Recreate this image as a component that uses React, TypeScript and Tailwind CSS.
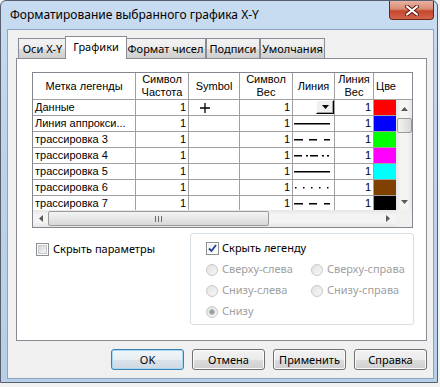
import React from 'react';

const UI = "font-['Noto_Sans','Open_Sans',sans-serif]";
const MS = "font-['Liberation_Sans',Arial,sans-serif]";

type LineKind = 'drop' | 'solid' | 'dash' | 'dashdot' | 'dot';

type Row = {
  name: string;
  plus?: boolean;
  line: LineKind;
  color: string;
};

const rows: Row[] = [
  { name: 'Данные', plus: true, line: 'drop', color: 'bg-[#ff0000]' },
  { name: 'Линия аппрокси...', line: 'solid', color: 'bg-[#0000ff]' },
  { name: 'трассировка 3', line: 'dash', color: 'bg-[#00ff00]' },
  { name: 'трассировка 4', line: 'dashdot', color: 'bg-[#ff00ff]' },
  { name: 'трассировка 5', line: 'solid', color: 'bg-[#00ffff]' },
  { name: 'трассировка 6', line: 'dot', color: 'bg-[#804000]' },
  { name: 'трассировка 7', line: 'dash', color: 'bg-[#000000]' },
];

const tabs = [
  { label: 'Оси X-Y', w: 'w-[49px]' },
  { label: 'Графики', w: 'w-[62px]', active: true },
  { label: 'Формат чисел', w: 'w-[81px]' },
  { label: 'Подписи', w: 'w-[54px]' },
  { label: 'Умолчания', w: 'w-[65px]' },
];

const cell = 'h-full border-r border-[#a0a0a0] shrink-0';

function LineSample({ kind }: { kind: LineKind }) {
  if (kind === 'drop') {
    return (
      <div className="flex h-full justify-end">
        <div className="w-[18px] h-[14px] bg-[#f0f0f0] border-t border-l border-white border-b border-r border-b-black border-r-black shadow-[inset_-1px_-1px_0_#a0a0a0] flex items-center justify-center">
          <svg width="7" height="4" viewBox="0 0 7 4">
            <path d="M0 0h7L3.5 4z" fill="#000" />
          </svg>
        </div>
      </div>
    );
  }
  // dash pieces as [x, width] pairs, measured off the screenshot
  let parts: [number, number][] = [];
  if (kind === 'solid') parts = [[1, 36]];
  if (kind === 'dash') parts = [[1, 9], [16, 8], [31, 6]];
  if (kind === 'dashdot') parts = [[1, 8], [13, 2], [17, 8], [29, 2], [34, 2]];
  if (kind === 'dot') parts = [[2, 1.5], [10, 1.5], [18, 1.5], [26, 1.5], [34, 1.5]];
  return (
    <svg width="41" height="15" className="block">
      {parts.map(([x, w], i) => (
        <rect key={i} x={x} y={7} width={w} height={1.5} fill="#000" />
      ))}
    </svg>
  );
}

function Arrow({ dir }: { dir: 'up' | 'down' | 'left' | 'right' }) {
  const d = {
    up: 'M0 4L3.5 0L7 4z',
    down: 'M0 0h7L3.5 4z',
    left: 'M4 0v7L0 3.5z',
    right: 'M0 0v7L4 3.5z',
  }[dir];
  const vert = dir === 'up' || dir === 'down';
  return (
    <svg width={vert ? 7 : 4} height={vert ? 4 : 7} viewBox={vert ? '0 0 7 4' : '0 0 4 7'}>
      <path d={d} fill="#5a5a5a" />
    </svg>
  );
}

function HeadCell({ w, children }: { w: string; children: React.ReactNode }) {
  return (
    <div className={`${w} ${cell} flex items-center justify-center text-center`}>
      <div>{children}</div>
    </div>
  );
}

function DataGrid() {
  return (
    <div className={`w-[381px] h-[156px] border border-[#828790] bg-white flex flex-col ${MS} text-[11px] text-black`}>
      <div className="flex h-[27px] shrink-0 border-b border-[#a0a0a0] leading-[13px]">
        <HeadCell w="w-[103px]">Метка легенды</HeadCell>
        <HeadCell w="w-[53px]">Символ<br />Частота</HeadCell>
        <HeadCell w="w-[51px]">Symbol</HeadCell>
        <HeadCell w="w-[53px]">Символ<br />Вес</HeadCell>
        <HeadCell w="w-[42px]">Линия</HeadCell>
        <HeadCell w="w-[39px]">Линия<br />Вес</HeadCell>
        <div className="w-[22px] h-full overflow-hidden whitespace-nowrap pl-[2px] flex items-center">Цве</div>
      </div>

      <div className="flex h-[110px] shrink-0">
        <div className="w-[363px] overflow-hidden">
          {rows.map((r) => (
            <div key={r.name} className="flex h-[16px] border-b border-[#a0a0a0] leading-[15px]">
              <div className={`w-[103px] ${cell} pl-[2px] whitespace-nowrap overflow-hidden`}>{r.name}</div>
              <div className={`w-[53px] ${cell} text-right pr-[2px]`}>1</div>
              <div className={`w-[51px] ${cell} pl-[11px] flex items-center`}>
                {r.plus && (
                  <svg width="10" height="10" viewBox="0 0 10 10">
                    <path d="M5 0v10M0 5h10" stroke="#000" strokeWidth="1.3" />
                  </svg>
                )}
              </div>
              <div className={`w-[53px] ${cell} text-right pr-[2px]`}>1</div>
              <div className={`w-[42px] ${cell}`}>
                <LineSample kind={r.line} />
              </div>
              <div className={`w-[39px] ${cell} text-right pr-[2px]`}>1</div>
              <div className={`w-[22px] h-full shrink-0 ${r.color}`} />
            </div>
          ))}
        </div>
        <div className="w-[16px] h-full bg-[linear-gradient(90deg,#e6e6e6,#f4f4f4_30%,#f4f4f4_70%,#e6e6e6)] flex flex-col">
          <div className="h-[17px] flex items-center justify-center">
            <Arrow dir="up" />
          </div>
          <div className="mt-[1px] ml-[1px] w-[15px] h-[15px] rounded-[2px] border border-[#9b9b9b] bg-[linear-gradient(90deg,#f3f3f3,#e6e6e6_50%,#d7d7d7)]" />
          <div className="flex-1" />
          <div className="h-[17px] flex items-center justify-center">
            <Arrow dir="down" />
          </div>
        </div>
      </div>

      <div className="flex h-[17px] shrink-0">
        <div className="w-[363px] h-full flex items-center bg-[linear-gradient(180deg,#e6e6e6,#f4f4f4_30%,#f4f4f4_70%,#e6e6e6)]">
          <div className="w-[15px] flex justify-center">
            <Arrow dir="left" />
          </div>
          <div className="w-[221px] h-[15px] rounded-[2px] border border-[#9b9b9b] bg-[linear-gradient(180deg,#f3f3f3,#e6e6e6_50%,#d7d7d7)] flex items-center justify-center gap-[2px]">
            <div className="w-px h-[6px] bg-[#6b6b6b]" />
            <div className="w-px h-[6px] bg-[#6b6b6b]" />
            <div className="w-px h-[6px] bg-[#6b6b6b]" />
          </div>
          <div className="flex-1" />
          <div className="w-[17px] flex justify-center">
            <Arrow dir="right" />
          </div>
        </div>
        <div className="w-[16px] h-full bg-[#f0f0f0]" />
      </div>
    </div>
  );
}

function CheckBox({ checked }: { checked?: boolean }) {
  return (
    <div className="w-[13px] h-[13px] border border-[#8e8f8f] bg-white p-[1px] shrink-0">
      {checked ? (
        <div className="w-full h-full bg-[linear-gradient(135deg,#e9edf3,#ffffff)] flex items-center justify-center">
          <svg width="9" height="9" viewBox="0 0 9 9">
            <path d="M1 4.5L3.5 7L8 1" fill="none" stroke="#23418a" strokeWidth="1.8" />
          </svg>
        </div>
      ) : (
        <div className="w-full h-full border border-[#c7cacf] bg-[linear-gradient(135deg,#d3d6da,#f6f6f6)]" />
      )}
    </div>
  );
}

function Radio({ selected }: { selected?: boolean }) {
  return (
    <div className="w-[12px] h-[12px] rounded-full border border-[#c8c8c8] bg-[linear-gradient(135deg,#e2e2e2,#f7f7f7)] flex items-center justify-center shrink-0">
      {selected && <div className="w-[6px] h-[6px] rounded-full bg-[#9a9a9a] border border-[#bdbdbd]" />}
    </div>
  );
}

function RadioItem({ label, selected }: { label: string; selected?: boolean }) {
  return (
    <div className="flex items-center gap-[4px] text-[#a0a0a0]">
      <Radio selected={selected} />
      <span>{label}</span>
    </div>
  );
}

function WinButton({ label, primary }: { label: string; primary?: boolean }) {
  const look = primary
    ? 'border-[#3c7fb1] shadow-[inset_0_0_0_1px_#a7d8f3] bg-[linear-gradient(#f0f5f8,#e7eef3_50%,#dae3ea_50%,#cfd9e1)]'
    : 'border-[#707070] shadow-[inset_0_0_0_1px_#fbfbfb] bg-[linear-gradient(#f2f2f2,#ebebeb_50%,#dddddd_50%,#cfcfcf)]';
  return (
    <button className={`w-[73px] h-[21px] rounded-[3px] border ${look} text-[11px] leading-none text-black`}>
      {label}
    </button>
  );
}

export default function App() {
  return (
    <div className={`w-[440px] h-[387px] bg-[#f2f2f2] overflow-hidden ${UI}`}>
      <div className="w-[438px] h-[383px] rounded-t-[6px] border border-[#56606e] bg-[linear-gradient(180deg,#c8dcf1,#bcd3eb_40%,#b8cfe8)] flex flex-col">
        {/* title bar */}
        <div className="h-[28px] flex justify-between shrink-0">
          <div className="pl-[9px] pt-[5px] text-[12px] text-black whitespace-nowrap">
            Форматирование выбранного графика X-Y
          </div>
          <div className="mr-[3px] w-[45px] h-[19px] rounded-b-[4px] border border-t-0 border-[#6d2618] bg-[linear-gradient(#eab1a2,#d98a74_45%,#c4452d_55%,#d4654a)] flex items-center justify-center">
            <svg width="14" height="11" viewBox="0 0 14 11">
              <path d="M2 1.5L12 9.5M12 1.5L2 9.5" stroke="#5a1a10" strokeWidth="4" strokeLinecap="round" />
              <path d="M2 1.5L12 9.5M12 1.5L2 9.5" stroke="#ffffff" strokeWidth="2.2" strokeLinecap="round" />
            </svg>
          </div>
        </div>

        {/* client area */}
        <div className="ml-[6px] w-[427px] h-[350px] border border-[#8ea4bd] bg-[#f0f0f0] flex flex-col shrink-0">
          <div className="mt-[6px] ml-[10px] h-[22px] flex items-end">
            {tabs.map((t) =>
              t.active ? (
                <div
                  key={t.label}
                  className={`${t.w} -mx-[2px] h-[23px] -mb-px relative z-10 bg-white border border-b-0 border-[#898c95] text-[11px] text-black text-center pt-[2px]`}
                >
                  {t.label}
                </div>
              ) : (
                <div
                  key={t.label}
                  className={`${t.w} h-[20px] border border-b-0 border-[#898c95] bg-[linear-gradient(#f3f3f3,#ebebeb_50%,#dddddd_50%,#cfcfcf)] text-[11px] text-black text-center pt-[2px] whitespace-nowrap`}
                >
                  {t.label}
                </div>
              )
            )}
          </div>

          <div className="ml-[8px] w-[411px] h-[283px] border border-[#898c95] bg-white shrink-0">
            <div className="ml-[15px] mt-[13px]">
              <DataGrid />
            </div>
            <div className="flex mt-[5px] text-[11px] text-black">
              <div className="w-[173px] pl-[19px] pt-[8px]">
                <div className="flex items-center gap-[4px]">
                  <CheckBox />
                  <span>Скрыть параметры</span>
                </div>
              </div>
              <div className="w-[224px] h-[92px] rounded-[3px] border border-[#d5dfe5] pt-[4px] pl-[15px]">
                <div className="h-[21px] flex items-center gap-[3px]">
                  <CheckBox checked />
                  <span>Скрыть легенду</span>
                </div>
                <div className="h-[21px] grid grid-cols-[105px_1fr] items-center">
                  <RadioItem label="Сверху-слева" />
                  <RadioItem label="Сверху-справа" />
                </div>
                <div className="h-[21px] grid grid-cols-[105px_1fr] items-center">
                  <RadioItem label="Снизу-слева" />
                  <RadioItem label="Снизу-справа" />
                </div>
                <div className="h-[21px] flex items-center">
                  <RadioItem label="Снизу" selected />
                </div>
              </div>
            </div>
          </div>

          <div className="mt-[8px] ml-[103px] flex gap-[8px]">
            <WinButton label="OK" primary />
            <WinButton label="Отмена" />
            <WinButton label="Применить" />
            <WinButton label="Справка" />
          </div>
        </div>
      </div>
    </div>
  );
}
